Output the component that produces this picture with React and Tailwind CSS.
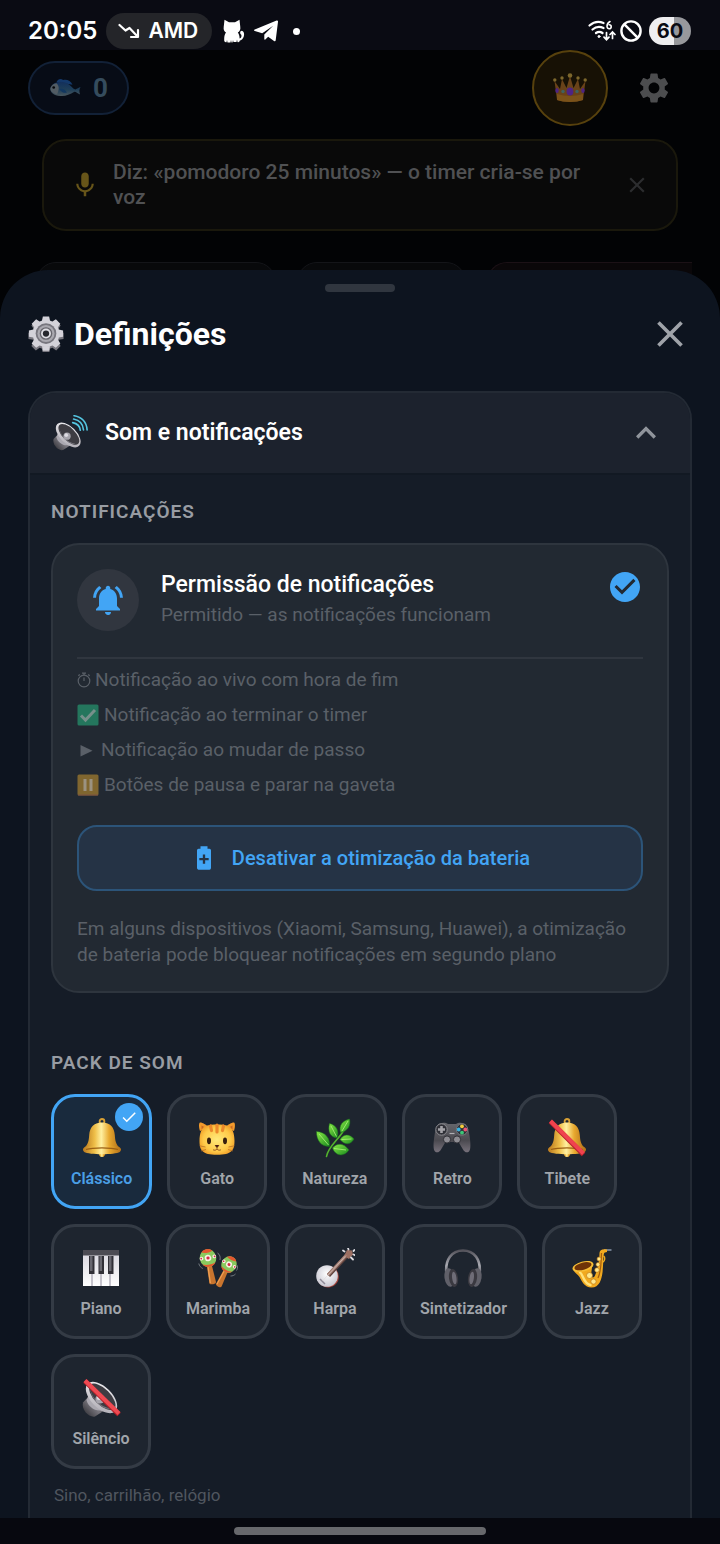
import {
  MdCheck,
  MdCheckCircle,
  MdClose,
  MdExpandLess,
  MdMic,
  MdNotificationsActive,
  MdSettings,
} from "react-icons/md";

function Gradients() {
  return (
    <svg className="absolute size-0" aria-hidden="true">
      <defs>
        <linearGradient id="gold" x1="0" x2="1" y1="0" y2="0">
          <stop offset="0" stopColor="#b9781c" />
          <stop offset=".3" stopColor="#f0c04a" />
          <stop offset=".48" stopColor="#fff0a0" />
          <stop offset=".7" stopColor="#e8a92f" />
          <stop offset="1" stopColor="#b06e18" />
        </linearGradient>
        <radialGradient id="catFur" cx=".5" cy=".5" r=".6">
          <stop offset="0" stopColor="#ffea7c" />
          <stop offset=".65" stopColor="#ffca48" />
          <stop offset="1" stopColor="#ee9420" />
        </radialGradient>
        <linearGradient id="leaf" x1="0" x2="1" y1="0" y2="1">
          <stop offset="0" stopColor="#8bea45" />
          <stop offset="1" stopColor="#18891f" />
        </linearGradient>
        <linearGradient id="pad" x1="0" x2="0" y1="0" y2="1">
          <stop offset="0" stopColor="#66676d" />
          <stop offset=".6" stopColor="#4b4a50" />
          <stop offset="1" stopColor="#77717b" />
        </linearGradient>
        <linearGradient id="keys" x1="0" x2="0" y1="0" y2="1">
          <stop offset="0" stopColor="#d5d3dc" />
          <stop offset="1" stopColor="#ffffff" />
        </linearGradient>
        <linearGradient id="rim" x1="0" x2="1" y1="0" y2="1">
          <stop offset="0" stopColor="#f4f3f6" />
          <stop offset="1" stopColor="#a9a6ae" />
        </linearGradient>
        <linearGradient id="dark" x1="0" x2="1" y1="1" y2="0">
          <stop offset="0" stopColor="#26262b" />
          <stop offset=".5" stopColor="#77757c" />
          <stop offset="1" stopColor="#3c3b41" />
        </linearGradient>
        <radialGradient id="drum" cx=".5" cy=".4" r=".6">
          <stop offset="0" stopColor="#ffffff" />
          <stop offset="1" stopColor="#c9c8d2" />
        </radialGradient>
        <linearGradient id="band" x1="0" x2="0" y1="0" y2="1">
          <stop offset="0" stopColor="#55545c" />
          <stop offset=".6" stopColor="#a9aab2" />
          <stop offset="1" stopColor="#55545c" />
        </linearGradient>
        <linearGradient id="fishBody" x1="0" x2="0" y1="0" y2="1">
          <stop offset="0" stopColor="#122f5c" />
          <stop offset=".55" stopColor="#1f3f58" />
          <stop offset="1" stopColor="#4a575d" />
        </linearGradient>
      </defs>
    </svg>
  );
}

function Drawing({ className = "size-10", children }) {
  return (
    <svg viewBox="0 0 40 40" className={className} fill="none" aria-hidden="true">
      {children}
    </svg>
  );
}

function BellShape() {
  return (
    <>
      <circle cx="20" cy="3.4" r="2.4" stroke="#d8a034" strokeWidth="1.8" />
      <path d="M16.5 33.5h7c0 3.5-1 5.5-3.5 5.5s-3.500-2-3.500-5.500z" fill="url(#gold)" />
      <path d="M20 4.500c8.500 0 12.300 5.200 12.800 12.500.4 5.700 1 9.500 5 12.800H2.200c4-3.300 4.600-7.100 5-12.800C7.700 9.700 11.500 4.500 20 4.500z" fill="url(#gold)" />
      <path d="M2.500 29.300C8 27 32 27 37.500 29.300c2 1 2 3.400.3 4.600-4.800 3-30.800 3-35.600 0-1.700-1.200-1.700-3.600.3-4.600z" fill="url(#gold)" />
      <path d="M4 31.500c7-2.200 25-2.200 32 0" stroke="#9c6014" strokeWidth="1.200" />
    </>
  );
}

function BellEmoji() {
  return (
    <Drawing>
      <BellShape />
    </Drawing>
  );
}

function MutedBellEmoji() {
  return (
    <Drawing>
      <BellShape />
      <path d="M3.500 3.500l33 33" stroke="#b51f2c" strokeWidth="5" />
      <path d="M3.500 3l33 32.500" stroke="#f0434e" strokeWidth="4" />
    </Drawing>
  );
}

function CatEmoji() {
  return (
    <Drawing>
      <path d="M3 13C1.500 8 2 5 3 4.500 4.500 4 9 6.500 11.500 9zM37 13c1.500-5 1-8 0-8.500-1.500-.5-6 2-8.500 4.500z" fill="#f29a2c" />
      <path d="M4.500 11.500L4.500 7.500 9 10zM35.500 11.500V7.500L31 10z" fill="#c96a24" />
      <path d="M9 7.800C15 6 25 6 31 7.800c4.500 1.500 6.500 8 6.500 15 0 9.500-2.500 14-17.500 14S2.500 32.300 2.500 22.800c0-7 2-13.500 6.500-15z" fill="url(#catFur)" />
      <path d="M13.500 8l1 4.500M20 7v7M26.500 8l-1 4.500" stroke="#ec8a2b" strokeWidth="3.200" strokeLinecap="round" />
      <ellipse cx="12" cy="22.800" rx="2" ry="3.400" fill="#38200e" />
      <ellipse cx="28" cy="22.800" rx="2" ry="3.400" fill="#38200e" />
      <path d="M18.300 27.500h3.400L20 29.500z" fill="#4b1d10" stroke="#4b1d10" strokeLinejoin="round" />
      <path d="M20 29.500v1.500c-1 1.500-3 1.500-4 .7M20 31c1 1.500 3 1.500 4 .7" stroke="#86461a" strokeWidth=".8" />
      <path d="M8.500 29l-6-1.200M9 31.500l-5 1.500M31.500 29l6-1.200M31 31.500l5 1.500" stroke="#b06a24" strokeWidth=".7" />
    </Drawing>
  );
}

function HerbEmoji() {
  return (
    <Drawing>
      <path d="M11.500 38.500C13 29 23 22 28 13.500" stroke="#52b32d" strokeWidth="1.600" strokeLinecap="round" />
      <g fill="url(#leaf)" stroke="#17761c" strokeWidth=".5">
        <path d="M25.500 14.500C23.500 7 28 2.500 34.500 1c1.500 6-1.500 12.500-9 13.500z" />
        <path d="M22 20c-7-1-9.500-6.500-7.500-14.500C21.500 7 24.500 13 22 20z" />
        <path d="M14.500 28.500C6 28.500 1.500 22.500 1.500 13.500c9 .5 14 7 13 15z" />
        <path d="M25 21.500c4-5.500 9-6 14-.5-3.500 6.500-9.500 6-14 .5z" />
        <path d="M17.500 30c4-5 11-5.500 16.500 2-5.500 7.500-13.500 6-16.500-2z" />
      </g>
      <path d="M27 13l6-10M21.500 18.500L16 8M13.500 27L4 16M26.500 21.500l10-.5M19 30.500l12 1.500" stroke="#b0f57c" strokeWidth=".8" />
    </Drawing>
  );
}

function GamepadEmoji() {
  return (
    <Drawing>
      <path d="M8 5.500c3-1.200 6-.8 8 .5h8c2-1.300 5-1.700 8-.5 3.500 1.300 4.500 5.500 5.500 12 1.200 7.500 1.500 14-.5 16-2 1.700-4.500.7-6-2l-4.500-7.500h-13L9 31.500c-1.500 2.700-4 3.700-6 2-2-2-1.700-8.500-.5-16 1-6.500 2-10.700 5.500-12z" fill="url(#pad)" />
      <circle cx="9.500" cy="11.500" r="5.700" fill="#2f3037" stroke="#8c8c91" />
      <path d="M9.500 8v7M6 11.500h7" stroke="#a4a3a8" strokeWidth="2.600" />
      <circle cx="30" cy="11.500" r="5.700" fill="#2f3037" stroke="#77777c" />
      <circle cx="30" cy="8.300" r="1.900" fill="#f4ce3a" />
      <circle cx="33.300" cy="11.500" r="1.900" fill="#ee5673" />
      <circle cx="30" cy="14.700" r="1.900" fill="#3dc878" />
      <circle cx="26.700" cy="11.500" r="1.900" fill="#36b4e4" />
      <circle cx="15" cy="21.500" r="3.600" fill="#8e8d93" stroke="#303036" />
      <circle cx="25" cy="21.500" r="3.600" fill="#8e8d93" stroke="#303036" />
      <path d="M17.500 15.500h5" stroke="#b1b0b5" strokeWidth="1.200" />
    </Drawing>
  );
}

function PianoEmoji() {
  return (
    <Drawing>
      <path d="M2 2h36v36H2z" fill="url(#keys)" />
      <path d="M2 2h36v5.500H2z" fill="#4c4b53" />
      <path d="M11 26v12M20 26v12M29 26v12" stroke="#a29fad" strokeWidth="1.200" />
      <path d="M8 8h5.500v18H8zM17.500 8H23v18h-5.500zM27 8h5.500v18H27z" fill="#302f36" />
      <path d="M9 8h2.500v15H9zM18.500 8H21v15h-2.500zM28 8h2.500v15H28z" fill="#68676f" />
    </Drawing>
  );
}

function Maraca() {
  return (
    <>
      <path d="M-2.500 8h5l1.200 17c0 2.300-6.700 2.300-6.700 0z" fill="#c9752e" />
      <path d="M-1.500 9l-.5 16" stroke="#f0a257" strokeWidth="1.200" />
      <ellipse rx="8.200" ry="9" fill="#8ac95e" />
      <path d="M-5.500-6.500C-3-10 3-10 5.500-6.500c-3 1.500-8 1.500-11 0zM-6.500 5.500c4 1.700 9 1.700 13 0-2 4.500-11 4.500-13 0z" fill="#e4572e" />
      <circle cx="0" cy="0" r="3.300" fill="#f6f2e2" />
      <circle cx="-6.500" cy="-.5" r="1.900" fill="#f6f2e2" />
      <circle cx="6.500" cy="-.5" r="1.900" fill="#f6f2e2" />
      <circle cx="0" cy="0" r="1.600" fill="#d62c45" />
      <circle cx="-6.800" cy="-.5" r=".9" fill="#d62c45" />
      <circle cx="6.800" cy="-.5" r=".9" fill="#d62c45" />
    </>
  );
}

function MaracasEmoji() {
  return (
    <Drawing>
      <g transform="translate(10 10) rotate(-10)">
        <Maraca />
      </g>
      <g transform="translate(31 16.500) rotate(27) scale(.92)">
        <Maraca />
      </g>
      <path d="M19.500 5c2.500 1.500 3 4 2.500 7M.8 15.500c.5 2.500 2 4 4 5M37.500 26c-1.500 1.500-3 2-5 2M38.500 22.500c1-1.500 1.200-3 1-5" stroke="#7c8188" strokeWidth=".9" />
    </Drawing>
  );
}

function BanjoEmoji() {
  return (
    <Drawing>
      <circle cx="13" cy="28.700" r="10.800" fill="#a8453b" />
      <circle cx="12" cy="28" r="10.800" fill="url(#drum)" />
      <path d="M13.500 27.500L32 7.500" stroke="#5c403c" strokeWidth="4.200" />
      <path d="M13 27L31 7.500" stroke="#a98377" strokeWidth="3" />
      <path d="M29 8l3-6 5 .5 1 4-4 4.500z" fill="#9c6f62" />
      <path d="M29.500 3.500l-1.500-1M33.500 1.500l-.5-1.500M38.500 3l1-1M36 9.500l2 2M38.500 6.500l1.500.8" stroke="#dddbe0" strokeWidth="1.800" strokeLinecap="round" />
      <path d="M5 31l5 5" stroke="#8f8b98" strokeWidth="1.500" />
      <path d="M7.500 33L31 7.500" stroke="#ded6d6" strokeWidth=".6" />
    </Drawing>
  );
}

function HeadphonesEmoji() {
  return (
    <Drawing>
      <path d="M3.500 27C1.500 11 9 2.500 20 2.500S38.500 11 36.500 27" stroke="url(#band)" strokeWidth="2.600" />
      <ellipse cx="6.500" cy="29.500" rx="5" ry="9.300" transform="rotate(-8 6.500 29.500)" fill="#606069" />
      <ellipse cx="10.500" cy="30" rx="4.500" ry="9" transform="rotate(-8 10.500 30)" fill="#3a3940" />
      <ellipse cx="11.300" cy="30" rx="2.200" ry="6.300" transform="rotate(-8 11.300 30)" fill="#6f6d77" />
      <ellipse cx="33.500" cy="29.500" rx="5" ry="9.300" transform="rotate(8 33.500 29.500)" fill="#606069" />
      <ellipse cx="29.500" cy="30" rx="4.500" ry="9" transform="rotate(8 29.500 30)" fill="#3a3940" />
      <ellipse cx="28.700" cy="30" rx="2.200" ry="6.300" transform="rotate(8 28.700 30)" fill="#6f6d77" />
    </Drawing>
  );
}

function SaxEmoji() {
  return (
    <Drawing>
      <path d="M32 2h7.500" stroke="#6e7b8c" strokeWidth="2" />
      <path d="M35 1.500c-4-1-7.500 0-7.500 3.500 0 9-2 16.500-4.500 22.500-1 2.400-3 2.500-3.500.5-.7-3 .5-7 1-12L1 20c1 5 4.500 6 6.500 9 2.500 4.500 5 10.500 12 10.500 8 0 10-8 11-15 1-7.500.5-15 1.500-19 .4-1.200 1.500-1.200 3-1.500z" fill="#f1a91f" />
      <path d="M8 24.500c3 1.500 3.500 11.500 10.500 12.500" stroke="#ffe27a" strokeWidth="2.400" strokeLinecap="round" />
      <path d="M29.500 5c-.5 8 0 18-3.500 25" stroke="#a45d0d" strokeWidth="1.200" />
      <ellipse cx="11" cy="18.500" rx="10.800" ry="5" transform="rotate(-15 11 18.500)" fill="#f7be36" />
      <ellipse cx="11" cy="18.200" rx="8.800" ry="3.600" transform="rotate(-15 11 18.200)" fill="#6f3308" />
      <g fill="#ffe88b" stroke="#b66e10" strokeWidth=".6">
        <circle cx="27" cy="11" r="2" />
        <circle cx="26" cy="16.500" r="2" />
        <circle cx="25" cy="22" r="2.300" />
        <circle cx="17.500" cy="27.500" r="3" />
        <circle cx="21.500" cy="33.500" r="2.600" />
      </g>
      <path d="M31.500 8c2 1 1.500 5-.5 6" stroke="#f1a91f" strokeWidth="1.400" />
    </Drawing>
  );
}

function SpeakerShape() {
  return (
    <>
      <path d="M2 24.500l7-7.500L22.500 33 14 38.500C8.500 40 0 32 2 24.500z" fill="url(#dark)" />
      <path d="M9.500 13.500L5.500 22c1 5.500 7 10.500 13 10.500L30 34z" fill="#aaa8b0" />
      <ellipse cx="20.500" cy="19.500" rx="19.500" ry="10.500" transform="rotate(45 20.500 19.500)" fill="url(#rim)" />
      <ellipse cx="21.300" cy="18.800" rx="16.800" ry="8" transform="rotate(45 21.300 18.800)" fill="#3d3c42" />
      <path d="M9.500 10c0 9 10 19 20 20.500C22 33 8.500 20 9.500 10z" fill="#77757d" />
      <circle cx="19" cy="21" r="4.600" fill="#a6a4ac" />
      <circle cx="18" cy="19.800" r="2.300" fill="#dddbe2" />
    </>
  );
}

function SpeakerEmoji() {
  return (
    <Drawing className="size-9 shrink-0">
      <g transform="translate(0 5) scale(.88)">
        <SpeakerShape />
      </g>
      <path d="M23 8.500c5 1 8 4 8.500 8.500M24 4.500c6.500 1.300 10.500 5.500 11 12M24.500.8C33 2 38.500 8 39 16.500" stroke="#54c5e0" strokeWidth="1.800" strokeLinecap="round" />
    </Drawing>
  );
}

function MutedSpeakerEmoji() {
  return (
    <Drawing>
      <SpeakerShape />
      <path d="M4 3l34 33.500" stroke="#b52029" strokeWidth="5" />
      <path d="M4 2.500l34 33" stroke="#ef4a52" strokeWidth="4" />
    </Drawing>
  );
}

const TEETH = [0, 45, 90, 135, 180, 225, 270, 315];

function GearEmoji() {
  return (
    <Drawing className="size-9 shrink-0">
      <g fill="#77767e">
        <circle cx="20" cy="22" r="15" />
        {TEETH.map((angle) => (
          <path key={angle} d="M15.500 8L16.500 2.500h7L24.500 8z" transform={`rotate(${angle} 20 22)`} />
        ))}
      </g>
      <g fill="#d3d2d9">
        <circle cx="20" cy="19.500" r="15" />
        {TEETH.map((angle) => (
          <path key={angle} d="M15.500 5.500L16.500.5h7l1 5z" transform={`rotate(${angle} 20 19.500)`} />
        ))}
      </g>
      <circle cx="20" cy="19.500" r="11.500" fill="#77767e" />
      <circle cx="20" cy="19.500" r="9.500" fill="#a9a8af" />
      <circle cx="20" cy="19.500" r="7" fill="#66656c" />
      <circle cx="20" cy="19.500" r="5.500" fill="#dedde3" />
      <circle cx="20" cy="19.500" r="3.500" fill="#26272d" />
    </Drawing>
  );
}

function FishEmoji() {
  return (
    <svg viewBox="0 0 34 24" className="h-6 w-8" fill="none" aria-hidden="true">
      <path d="M8 5.500C9.500 2 13 1.500 15 3.500c4-1 8 .5 10 5z" fill="#14396b" />
      <path d="M1.500 12C4 6 11 4 18 6.500c5 2 7 6.500 10 7 2-.5 3.500-2 5.500-2.500-1.500 2-1.500 5.500-.5 8-2-.8-4-3-6-3-5 3-9.500 5-15 4.500C5 20 1 17 1.500 12z" fill="url(#fishBody)" />
      <path d="M1.500 12C3 8.500 5 7.500 8 7c3.500 3 2.500 8 .5 12C4 17.500 1 15.500 1.500 12z" fill="#525c63" />
      <circle cx="5" cy="11.500" r="1.400" fill="#05080c" />
      <path d="M11 13c2 3.500 5 4.500 8 4-1-3-4-5-8-4z" fill="#12375f" />
    </svg>
  );
}

function CrownEmoji() {
  return (
    <svg viewBox="0 0 34 30" className="h-[30px] w-[34px]" fill="none" aria-hidden="true">
      <path d="M4 27L1.500 8l5.500 8L9 6l4.500 9L17 3l3.500 12L25 6l2 10 5.500-8L30 27c-7 2.500-19 2.500-26 0z" fill="#694219" />
      <path d="M4 21c8 2.500 18 2.500 26 0v6c-7 2.500-19 2.500-26 0z" fill="#7a5219" />
      <g fill="#7c672c">
        <circle cx="1.800" cy="7" r="1.700" />
        <circle cx="9" cy="5" r="1.700" />
        <circle cx="17" cy="2.500" r="2.300" />
        <circle cx="25" cy="5" r="1.700" />
        <circle cx="32.200" cy="7" r="1.700" />
      </g>
      <ellipse cx="17" cy="18.500" rx="3.400" ry="4" fill="#4e2483" />
      <ellipse cx="4" cy="17.500" rx="1.700" ry="2.500" fill="#4e2483" />
      <ellipse cx="30" cy="17.500" rx="1.700" ry="2.500" fill="#4e2483" />
      <circle cx="10" cy="18.500" r="1.700" fill="#3e6360" />
      <circle cx="24" cy="18.500" r="1.700" fill="#3e6360" />
    </svg>
  );
}

function StatusBar() {
  return (
    <div className="flex h-[50px] items-center bg-[#0a0b13] pt-3 pr-[29px] pl-7 font-[Inter,sans-serif] text-white">
      <span className="text-2xl font-semibold">20:05</span>
      <span className="ml-[9px] flex h-9 items-center gap-2 rounded-full bg-[#242529] pr-3.5 pl-3">
        <svg viewBox="0 0 22 16" className="h-4 w-[22px]" fill="none" stroke="currentColor" strokeWidth="2.200" strokeLinejoin="round" strokeLinecap="round" aria-hidden="true">
          <path d="M1.500 2l6 5.500 4-2.500 8 8.500M20 7v7h-7" />
        </svg>
        <span className="text-[21px] font-semibold">AMD</span>
      </span>
      <svg viewBox="0 0 24 24" className="ml-2.5 size-6" fill="currentColor" aria-hidden="true">
        <path d="M2.500.8L7 3.200h6L17.500.8l.8 7.200c.5 3-1 4.500-2.500 5.500 1.200 1.500 1.800 3.500 1.800 6 1.500-.5 2.300-2 1.700-3.800-1.600-1-1.500-4 .5-4 3 .5 3.500 7-1 9.500l-1 .3c-.2 1.700-1.500 2-2.300 1.500l-.5-2.400-.5 2.500h-3L11 21l-.5 2.500h-1L9 21l-.5 2.500h-3L5 21l-.5 2.200C2.500 23.500 2 22 2.200 20c0-3 .6-5 1.800-6.500C2.500 12.500 1.200 11 1.700 8z" />
      </svg>
      <svg viewBox="0 0 24 22" className="ml-2 h-[22px] w-6" fill="currentColor" aria-hidden="true">
        <path d="M22.600.6C23.500.2 24.100.7 24 1.700l-2.300 18.600c-.1 1-.9 1.200-1.700.7l-5.800-4.300-2.900 2.900c-.4.4-1 .2-1-.5v-4.600l8.900-8.800-11 7.500L.8 11.100c-1-.4-1-1.100 0-1.500z" />
      </svg>
      <span className="ml-[15px] size-[7px] rounded-full bg-white" />
      <svg viewBox="0 0 28 22" className="ml-auto h-[22px] w-7" fill="none" stroke="currentColor" strokeWidth="2.200" strokeLinecap="round" aria-hidden="true">
        <path d="M1.500 5.500C6 1.500 11 1 15.500 3M4.500 9.500C8 6.500 12 6.300 15.500 8M8 13c2-1.500 4.500-1.500 6.500 0" />
        <circle cx="11" cy="16.500" r="1" fill="currentColor" strokeWidth="1" />
        <path d="M22 1.500c-2 1-3 2.700-3 5M21.200 4.700a2 2 0 1 1 0 4 2 2 0 0 1-2.100-2" strokeWidth="1.600" />
        <path d="M18.500 12.500v6.500M16 17.200l2.500 2.500 2.500-2.500M24.500 18.500v-6.200M22 14.500l2.500-2.500 2.500 2.500" strokeWidth="1.700" />
      </svg>
      <svg viewBox="0 0 22 22" className="mr-[7px] ml-1 size-[22px]" fill="none" stroke="currentColor" strokeWidth="2.400" aria-hidden="true">
        <circle cx="11" cy="11" r="9.600" />
        <path d="M4.200 4.200l13.600 13.600" />
      </svg>
      <span className="flex h-7 w-[42px] items-center justify-center rounded-full bg-linear-to-r from-[#eeeef0] from-60% to-[#97989c] to-60% text-xl font-bold text-[#0a0b13]">
        60
      </span>
    </div>
  );
}

function HomeScreen() {
  return (
    <div className="bg-[#020305]">
      <header className="flex h-[76px] items-center px-7">
        <div className="flex h-[54px] items-center gap-3 rounded-full border-2 border-[#122137] bg-[#070c16] px-[19px]">
          <FishEmoji />
          <span className="text-[26px] font-bold text-[#354c5d]">0</span>
        </div>
        <button type="button" aria-label="Premium" className="ml-auto flex size-[76px] items-center justify-center rounded-full border-2 border-[#57410d] bg-[#171105]">
          <CrownEmoji />
        </button>
        <button type="button" aria-label="Abrir definições" className="mr-5 ml-7 text-[#4c4d4f]">
          <MdSettings className="size-9" />
        </button>
      </header>
      <div className="mx-[42px] mt-[13px] flex items-center rounded-3xl border-2 border-[#1a180c] bg-[#090909] px-[26px] py-[19px]">
        <MdMic className="size-[30px] shrink-0 text-[#675519]" />
        <p className="ml-[13px] flex-1 text-[21px] leading-[25px] font-medium text-[#505153]">
          Diz: «pomodoro 25 minutos» — o timer cria-se por voz
        </p>
        <button type="button" aria-label="Dispensar" className="ml-10 text-[#2c2d2f]">
          <MdClose className="size-[26px]" />
        </button>
      </div>
      <div className="mt-[31px] flex h-12 gap-[21px] overflow-hidden pr-7 pl-9">
        <div className="h-20 w-60 shrink-0 rounded-[20px] border border-[#141519] bg-[#08090b]" />
        <div className="h-20 w-[169px] shrink-0 rounded-[20px] border border-[#141519] bg-[#08090b]" />
        <div className="h-20 flex-1 rounded-l-[20px] border border-r-0 border-[#1b1116] bg-[#0a0709]" />
      </div>
    </div>
  );
}

function StopwatchGlyph() {
  return (
    <svg viewBox="0 0 14 16" className="h-4 w-3.5" fill="none" stroke="currentColor" strokeWidth="1.200" aria-hidden="true">
      <circle cx="7" cy="9" r="5.800" />
      <path d="M5 1.200h4M7 1.200v2M7 9V5.500M1.300 3.800l1.500-1.300M12.700 3.800l-1.500-1.300" />
    </svg>
  );
}

function CheckGlyph() {
  return (
    <svg viewBox="0 0 22 22" className="size-[22px]" fill="none" aria-hidden="true">
      <rect x=".5" y=".5" width="21" height="21" rx="1.500" fill="#24765d" />
      <path d="M4 11.500l4.500 4.500L18 6" stroke="#76908b" strokeWidth="3" />
    </svg>
  );
}

function PlayGlyph() {
  return (
    <svg viewBox="0 0 18 16" className="h-4 w-[18px]" fill="currentColor" aria-hidden="true">
      <path d="M3.500 3v11.500L15.500 8.700z" />
    </svg>
  );
}

function PauseGlyph() {
  return (
    <svg viewBox="0 0 22 22" className="size-[22px]" fill="none" aria-hidden="true">
      <rect x=".5" y=".5" width="21" height="21" rx="1.500" fill="#80662f" />
      <path d="M1 21h20" stroke="#7b5045" />
      <path d="M8 5v12M14 5v12" stroke="#9b9281" strokeWidth="3" />
    </svg>
  );
}

const FEATURES = [
  { glyph: StopwatchGlyph, gap: "gap-1", text: "Notificação ao vivo com hora de fim" },
  { glyph: CheckGlyph, gap: "gap-[5px]", text: "Notificação ao terminar o timer" },
  { glyph: PlayGlyph, gap: "gap-1.5", text: "Notificação ao mudar de passo" },
  { glyph: PauseGlyph, gap: "gap-[5px]", text: "Botões de pausa e parar na gaveta" },
];

const PACKS = [
  { name: "Clássico", emoji: BellEmoji },
  { name: "Gato", emoji: CatEmoji },
  { name: "Natureza", emoji: HerbEmoji },
  { name: "Retro", emoji: GamepadEmoji },
  { name: "Tibete", emoji: MutedBellEmoji },
  { name: "Piano", emoji: PianoEmoji },
  { name: "Marimba", emoji: MaracasEmoji },
  { name: "Harpa", emoji: BanjoEmoji },
  { name: "Sintetizador", emoji: HeadphonesEmoji },
  { name: "Jazz", emoji: SaxEmoji },
  { name: "Silêncio", emoji: MutedSpeakerEmoji },
];

function PermissionCard() {
  return (
    <div className="mt-[19px] rounded-[28px] border-2 border-[#2e353e] bg-[#222932] px-6 pt-6 pb-[23px]">
      <div className="flex items-center">
        <span className="flex size-[62px] shrink-0 items-center justify-center rounded-full bg-[#31363f]">
          <MdNotificationsActive className="size-9 text-[#42a5f5]" />
        </span>
        <div className="ml-[22px] flex-1">
          <h4 className="text-[23px] leading-[30px] font-medium text-white">Permissão de notificações</h4>
          <p className="text-[19px] leading-[30px] text-[#5a6068]">Permitido — as notificações funcionam</p>
        </div>
        <MdCheckCircle className="size-9 self-start text-[#42a5f5]" />
      </div>
      <ul className="mt-[26px] border-t-2 border-[#30363f] pt-[3px] text-[19px] leading-[35px] text-[#5a6068]">
        {FEATURES.map(({ glyph: Glyph, gap, text }) => (
          <li key={text} className={`flex items-center ${gap}`}>
            <Glyph />
            {text}
          </li>
        ))}
      </ul>
      <button type="button" className="mt-[23px] flex h-[66px] w-full items-center justify-center gap-3.5 rounded-[20px] border-2 border-[#2c5479] bg-[#253345] text-xl font-medium text-[#42a5f5]">
        <svg viewBox="0 0 24 24" className="size-7" fill="currentColor" aria-hidden="true">
          <path d="M16.670 4H15V2H9v2H7.330A1.330 1.330 0 0 0 6 5.330v15.340C6 21.400 6.600 22 7.330 22h9.340A1.330 1.330 0 0 0 18 20.670V5.330A1.330 1.330 0 0 0 16.670 4M16 14h-3v3h-2v-3H8v-2h3V9h2v3h3v2" />
        </svg>
        Desativar a otimização da bateria
      </button>
      <p className="mt-[25px] text-[19px] leading-[26px] text-[#5a6068]">
        Em alguns dispositivos (Xiaomi, Samsung, Huawei), a otimização de bateria pode bloquear notificações em segundo plano
      </p>
    </div>
  );
}

function PackTile({ name, emoji: Emoji, selected }) {
  return (
    <button
      type="button"
      aria-pressed={selected}
      className={`relative flex h-[115px] min-w-[100px] flex-col items-center rounded-3xl border-[3px] px-[17px] pt-[21px] ${
        selected ? "border-[#42a5f5] bg-[#192a3d] text-[#4a9fe6]" : "border-[#343b45] bg-[#1e252f] text-[#a1a5ab]"
      }`}
    >
      <Emoji />
      <span className="mt-[9px] text-base leading-6 font-semibold">{name}</span>
      {selected && (
        <span className="absolute top-1.5 right-1.5 flex size-7 items-center justify-center rounded-full bg-[#42a5f5] text-white">
          <MdCheck className="size-[18px]" />
        </span>
      )}
    </button>
  );
}

function SettingsSheet() {
  return (
    <section aria-label="Definições" className="relative -mt-10 flex flex-1 flex-col rounded-t-[48px] bg-[#0d141f] px-7 pt-3.5">
      <div className="h-2 w-[70px] self-center rounded-full bg-[#30363f]" />
      <div className="mt-5 flex h-11 items-center">
        <GearEmoji />
        <h2 className="ml-2.5 text-[32px] leading-[44px] font-bold text-white">Definições</h2>
        <button type="button" aria-label="Fechar" className="ml-auto text-[#9fa3a9]">
          <MdClose className="size-11" />
        </button>
      </div>
      <div className="mt-[35px] flex-1 overflow-hidden rounded-t-[28px] border-2 border-b-0 border-[#232a34] bg-[#151c27]">
        <button type="button" aria-expanded="true" className="flex h-20 w-full items-center bg-[#1c222d] pr-6 pl-[22px]">
          <SpeakerEmoji />
          <span className="ml-[17px] text-[23px] leading-7 font-semibold text-white">Som e notificações</span>
          <MdExpandLess className="ml-auto size-10 text-[#8f949b]" />
        </button>
        <div className="border-t-2 border-[#121923] px-[21px] pt-[25px] pb-[11px]">
          <h3 className="text-[19px] leading-6 font-semibold tracking-[1px] text-[#989ca3]">NOTIFICAÇÕES</h3>
          <PermissionCard />
          <h3 className="mt-[58px] text-[19px] leading-6 font-semibold tracking-[1px] text-[#989ca3]">PACK DE SOM</h3>
          <div className="mt-[19px] flex flex-wrap gap-[15px]">
            {PACKS.map((pack) => (
              <PackTile key={pack.name} {...pack} selected={pack.name === "Clássico"} />
            ))}
          </div>
          <p className="mt-[14px] ml-[3px] text-[17px] leading-6 text-[#50565f]">Sino, carrilhão, relógio</p>
        </div>
      </div>
    </section>
  );
}

export default function App() {
  return (
    <main className="flex min-h-screen flex-col bg-[#020305] font-[Roboto,sans-serif]">
      <Gradients />
      <StatusBar />
      <HomeScreen />
      <SettingsSheet />
      <div className="flex h-[26px] items-center justify-center bg-[#07080f]">
        <div className="h-2 w-[35%] rounded-full bg-[#67686c]" />
      </div>
    </main>
  );
}
